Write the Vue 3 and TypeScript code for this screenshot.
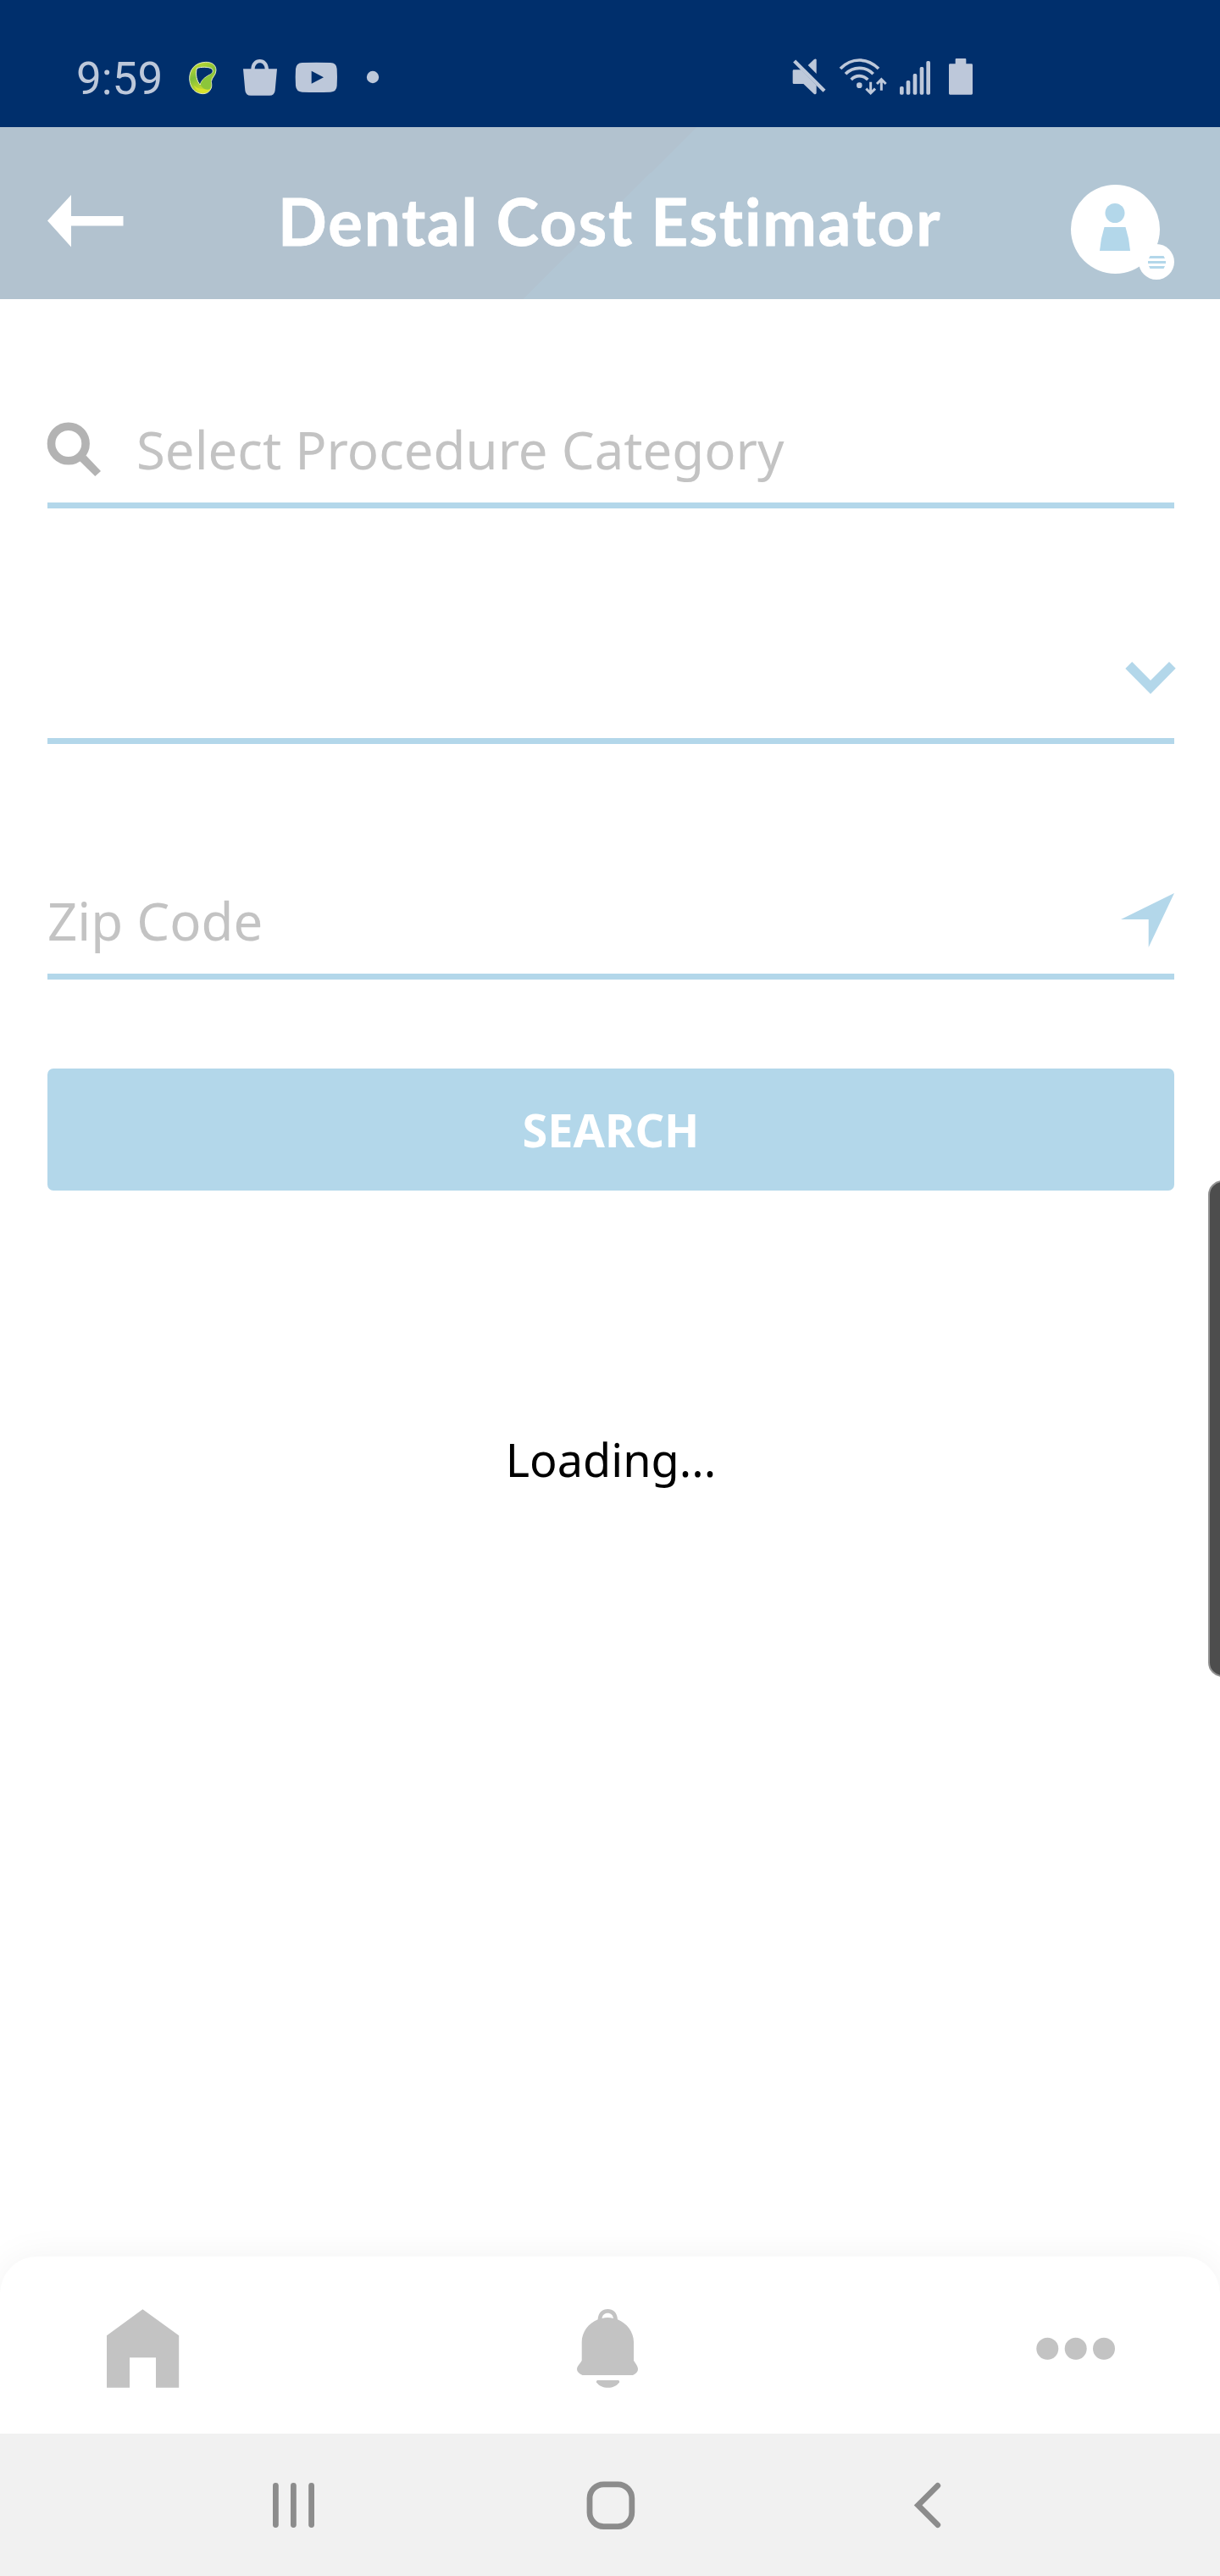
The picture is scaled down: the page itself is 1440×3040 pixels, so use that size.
<script setup lang="ts">
const title: string = 'Dental Cost Estimator'
const signalBars: { x: number; y: number }[] = [
  { x: 486, y: 156 },
  { x: 509, y: 135 },
  { x: 533, y: 111 },
  { x: 557, y: 87 },
  { x: 580, y: 66 },
]
</script>

<template>
  <div class="screen">
    <div class="status">
      <span class="time">9:59</span>
      <svg class="logo" viewBox="489 30 99 180" width="33" height="60">
        <defs>
          <linearGradient id="leaf" x1="0" y1="0" x2="0.35" y2="1">
            <stop offset="0" stop-color="#d3e12f" />
            <stop offset="0.5" stop-color="#7fbf3b" />
            <stop offset="1" stop-color="#d6e02c" />
          </linearGradient>
        </defs>
        <path d="M548 70C570 69 585 80 585 99C585 116 570 124 568 139C570 151 571 160 564 169C558 178 550 182 538 182C512 181 494 163 491 132C489 98 510 71 548 70Z" fill="url(#leaf)" stroke="#f4f8d8" stroke-width="2.5" />
        <path d="M517 92C531 86 560 86 571 94C577 103 572 111 562 115C545 124 533 134 529 150C517 139 511 113 517 92Z" fill="#002f6c" stroke="#f4f8d8" stroke-width="3" />
        <path d="M506 152C518 164 528 164 538 165L560 168C551 181 520 183 506 152Z" fill="#d9e32c" />
        <path d="M530 150C532 136 546 124 563 115L576 106C571 120 566 126 567 140C568 151 569 159 562 166C548 170 536 163 530 150Z" fill="#8cc63a" />
      </svg>
      <svg class="bag" viewBox="678 30 126 180" width="42" height="60">
        <path d="M681 94H709C710 74 722 60 740 60S770 74 771 94H801L794 170Q792 188 774 188H708Q690 188 688 170ZM722 94H758C757 81 750 73 740 73S723 81 722 94Z" fill="#bdc8da" fill-rule="evenodd" />
      </svg>
      <svg class="video" viewBox="864 30 153 180" width="51" height="60">
        <path d="M890 72Q940 70 990 72Q1012 73 1013 94Q1015 124 1013 154Q1012 175 990 176Q940 178 890 176Q869 175 867 154Q865 124 867 94Q869 73 890 72ZM923 101V146L966 123.500Z" fill="#bdc8da" fill-rule="evenodd" />
      </svg>
      <svg class="dot" viewBox="1116 30 48 180" width="16" height="60"><circle cx="1140" cy="123" r="21.500" fill="#bdc8da" /></svg>

      <svg class="mute" viewBox="105 30 120 180" width="40" height="60">
        <path d="M191 61V111L161 81L182 61Q188 56 191 61Z" fill="#bdc8da" />
        <path d="M111 97H137L191 152V180Q188 186 182 182L145 147H111Q107 147 107 143V101Q107 97 111 97Z" fill="#bdc8da" />
        <path d="M113 66L219 172" stroke="#bdc8da" stroke-width="13" />
      </svg>
      <svg class="wifi" viewBox="270 30 171 180" width="57" height="60">
        <g fill="none" stroke="#bdc8da" stroke-width="11">
          <path d="M276 93Q305 63 343 63T411 93" />
          <path d="M294 112Q314 91 343 91T392 112" />
          <path d="M314 132Q326 119 343 119T373 132" />
          <path d="M383 140V180M367 164L383 180L399 164M421 170V131M405 147L421 131L437 147" stroke-width="9" />
        </g>
        <circle cx="343" cy="152" r="10" fill="#bdc8da" />
      </svg>
      <svg class="signal" viewBox="483 30 114 180" width="38" height="60">
        <rect v-for="bar in signalBars" :key="bar.x" :x="bar.x" :y="bar.y" width="14" :height="185 - bar.y" rx="5" fill="#bdc8da" />
      </svg>
      <svg class="battery" viewBox="657 30 90 180" width="30" height="60">
        <path d="M686 57H718Q721 57 721 60V76H740Q744 76 744 80V181Q744 185 740 185H664Q660 185 660 181V80Q660 76 664 76H683V60Q683 57 686 57Z" fill="#bdc8da" />
      </svg>
    </div>

    <header class="header">
      <svg class="back" viewBox="56 229 90 64" width="90" height="64">
        <path d="M56 260.500L84 230V255H145.500V266.500H84V291.500Z" fill="#fff" />
      </svg>
      <h1 class="title">{{ title }}</h1>
      <svg class="avatar" viewBox="1263 217 124 114" width="124" height="114">
        <circle cx="1316.500" cy="270.500" r="52.500" fill="#fff" />
        <circle cx="1365" cy="309" r="21" fill="#fff" />
        <g fill="#b3d7ea">
          <circle cx="1316" cy="251.500" r="11.500" />
          <path d="M1303.500 268H1328.500Q1333 282 1334 296H1298Q1299 282 1303.500 268Z" />
          <path d="M1357.500 302H1373.500L1375 305H1356ZM1355 308H1376V311H1355ZM1356 314H1375L1373.500 317H1357.500Z" />
        </g>
      </svg>
    </header>

    <main class="content">
      <div class="field first">
        <svg class="search-icon" viewBox="55 498 65 65" width="65" height="65">
          <circle cx="80.800" cy="523.500" r="20.300" fill="none" stroke="#b3b3b3" stroke-width="9.600" />
          <path d="M94 544L101.500 537.500L119 556L112.300 562Z" fill="#b3b3b3" />
        </svg>
        <span class="placeholder category">Select Procedure Category</span>
      </div>
      <div class="field">
        <svg class="chevron" viewBox="1328 781 60 39" width="60" height="39">
          <path d="M1336.200 781L1358 803L1380 781L1387.700 788.800L1358 819L1328.300 789Z" fill="#b3d7ea" />
        </svg>
      </div>
      <div class="field">
        <span class="placeholder">Zip Code</span>
        <svg class="locate" viewBox="1323 1053 63 66" width="63" height="66">
          <path d="M1386 1054L1323 1085H1355.700V1118Z" fill="#b3d7ea" />
        </svg>
      </div>
      <button class="search" type="button">SEARCH</button>
      <p class="loading">Loading...</p>
    </main>
    <div class="edge-handle"></div>

    <nav class="tabs">
      <svg viewBox="126 2725 86 93" width="86" height="93">
        <path d="M126 2756.300L168.400 2725.300L211.200 2756.300V2817.700H184V2782.300H153V2817.700H126Z" fill="#c3c3c3" />
      </svg>
      <svg class="bell" viewBox="681 2725 72 93" width="72" height="93">
        <g fill="#c3c3c3">
          <path fill-rule="evenodd" d="M705.600 2737.300C706 2729 711 2725 717.300 2725S728.600 2729 729 2737.300C740 2742 748 2752 748 2764V2785.700C750 2789 753 2792 753 2796Q753 2800 747 2803H687.500Q681 2800 681 2796C681 2792 685 2789 686.700 2785.700V2764C686.700 2752 694.500 2742 705.600 2737.300ZM710.500 2736Q717.300 2734.200 724 2736C723.500 2732 721 2729.700 717.300 2729.700S711 2732 710.500 2736Z" />
          <path d="M705.500 2809H729.500Q731.500 2809 731 2811.500C727.500 2816 723 2817.800 717.500 2817.800S707.500 2816 704 2811.500Q703.500 2809 705.500 2809Z" />
        </g>
      </svg>
      <svg viewBox="1223 2725 93 93" width="93" height="93" fill="#c3c3c3">
        <circle cx="1236.300" cy="2771.700" r="13" />
        <circle cx="1269.700" cy="2771.700" r="13" />
        <circle cx="1303" cy="2771.700" r="13" />
      </svg>
    </nav>

    <div class="system-nav">
      <svg viewBox="322 2928 50 58" width="50" height="58" fill="#8c8c8c">
        <rect x="322" y="2930" width="6.800" height="53" rx="3.400" />
        <rect x="343" y="2930" width="6.800" height="53" rx="3.400" />
        <rect x="364.200" y="2930" width="6.800" height="53" rx="3.400" />
      </svg>
      <svg class="home" viewBox="692 2928 58 58" width="58" height="58">
        <rect x="696" y="2931.800" width="49.800" height="49.800" rx="16.500" fill="none" stroke="#8c8c8c" stroke-width="6.800" />
      </svg>
      <svg viewBox="1078 2928 34 58" width="34" height="58">
        <path d="M1106.800 2933.300L1083.600 2956.500L1106.800 2979.700" fill="none" stroke="#8c8c8c" stroke-width="6.800" stroke-linecap="round" />
      </svg>
    </div>
  </div>
</template>

<style>
body {
  margin: 0;
  background: #fff;
}
</style>

<style scoped>
.screen {
  position: relative;
  display: flex;
  flex-direction: column;
  width: 1440px;
  height: 3040px;
  overflow: hidden;
  background: #fff;
  font-family: "Noto Sans", sans-serif;
}
svg {
  display: block;
  flex: none;
}
.status {
  box-sizing: border-box;
  display: flex;
  height: 150px;
  padding: 60px 291px 0 90px;
  background: #002f6c;
}
.time {
  width: 133px;
  color: #bdc8da;
  font: 400 53px/66px Roboto, sans-serif;
  white-space: nowrap;
}
.bag { margin-left: 30px; }
.video { margin-left: 20px; }
.dot { margin-left: 33px; }
.mute { margin-left: auto; }
.wifi { margin-left: 15px; }
.signal { margin-left: 14px; }
.battery { margin-left: 20px; }
.header {
  box-sizing: border-box;
  display: flex;
  align-items: flex-start;
  height: 203px;
  padding: 67px 53px 0 56px;
  background: linear-gradient(135.3deg, #b2c2cf 0 50%, #b2c6d4 50%);
}
.back { margin-top: 12px; }
.title {
  flex: 1;
  margin: 0;
  padding-left: 182px;
  color: #fff;
  font: 700 76px/88px Lato, sans-serif;
  letter-spacing: 1.9px;
  word-spacing: 0;
  -webkit-text-stroke: 0.8px #fff;
  white-space: nowrap;
}
.content {
  display: flex;
  flex-direction: column;
  height: 2310px;
  padding: 0 54px 0 56px;
}
.field {
  box-sizing: border-box;
  display: flex;
  align-items: flex-end;
  height: 278px;
  border-bottom: 7px solid #b3d7ea;
}
.field.first { height: 247px; }
.search-icon { margin: 0 0 30px -1px; }
.placeholder {
  margin-bottom: 23px;
  color: #c3c3c3;
  font-size: 61.7px;
  line-height: 80px;
  white-space: nowrap;
}
.category { margin-left: 41px; }
.chevron { margin: 0 -2px 51px auto; }
.locate { margin: 0 0 30px auto; }
.search {
  height: 144px;
  margin-top: 105px;
  padding: 0;
  border: 0;
  border-radius: 7px;
  background: #b3d7ea;
  color: #fff;
  font: 700 54px/144px "Noto Sans", sans-serif;
}
.loading {
  margin: 281px 0 0;
  color: #000;
  font-size: 54px;
  line-height: 72px;
  text-align: center;
}
.edge-handle {
  position: absolute;
  top: 1393px;
  right: -20px;
  box-sizing: border-box;
  width: 34px;
  height: 586px;
  border: 2px solid #929292;
  border-radius: 20px;
  background: #4d4d4d;
}
.tabs {
  box-sizing: border-box;
  display: flex;
  justify-content: space-between;
  height: 209px;
  padding: 62px 124px 0 126px;
  border-radius: 44px 44px 0 0;
  background: #fff;
  box-shadow: 0 0 44px rgba(0, 0, 0, 0.055);
}
.bell { margin-right: 1px; }
.system-nav {
  position: relative;
  box-sizing: border-box;
  display: flex;
  justify-content: space-between;
  height: 168px;
  padding: 56px 328px 0 322px;
  background: #f1f1f1;
}
.home { margin-right: 8px; }
</style>
